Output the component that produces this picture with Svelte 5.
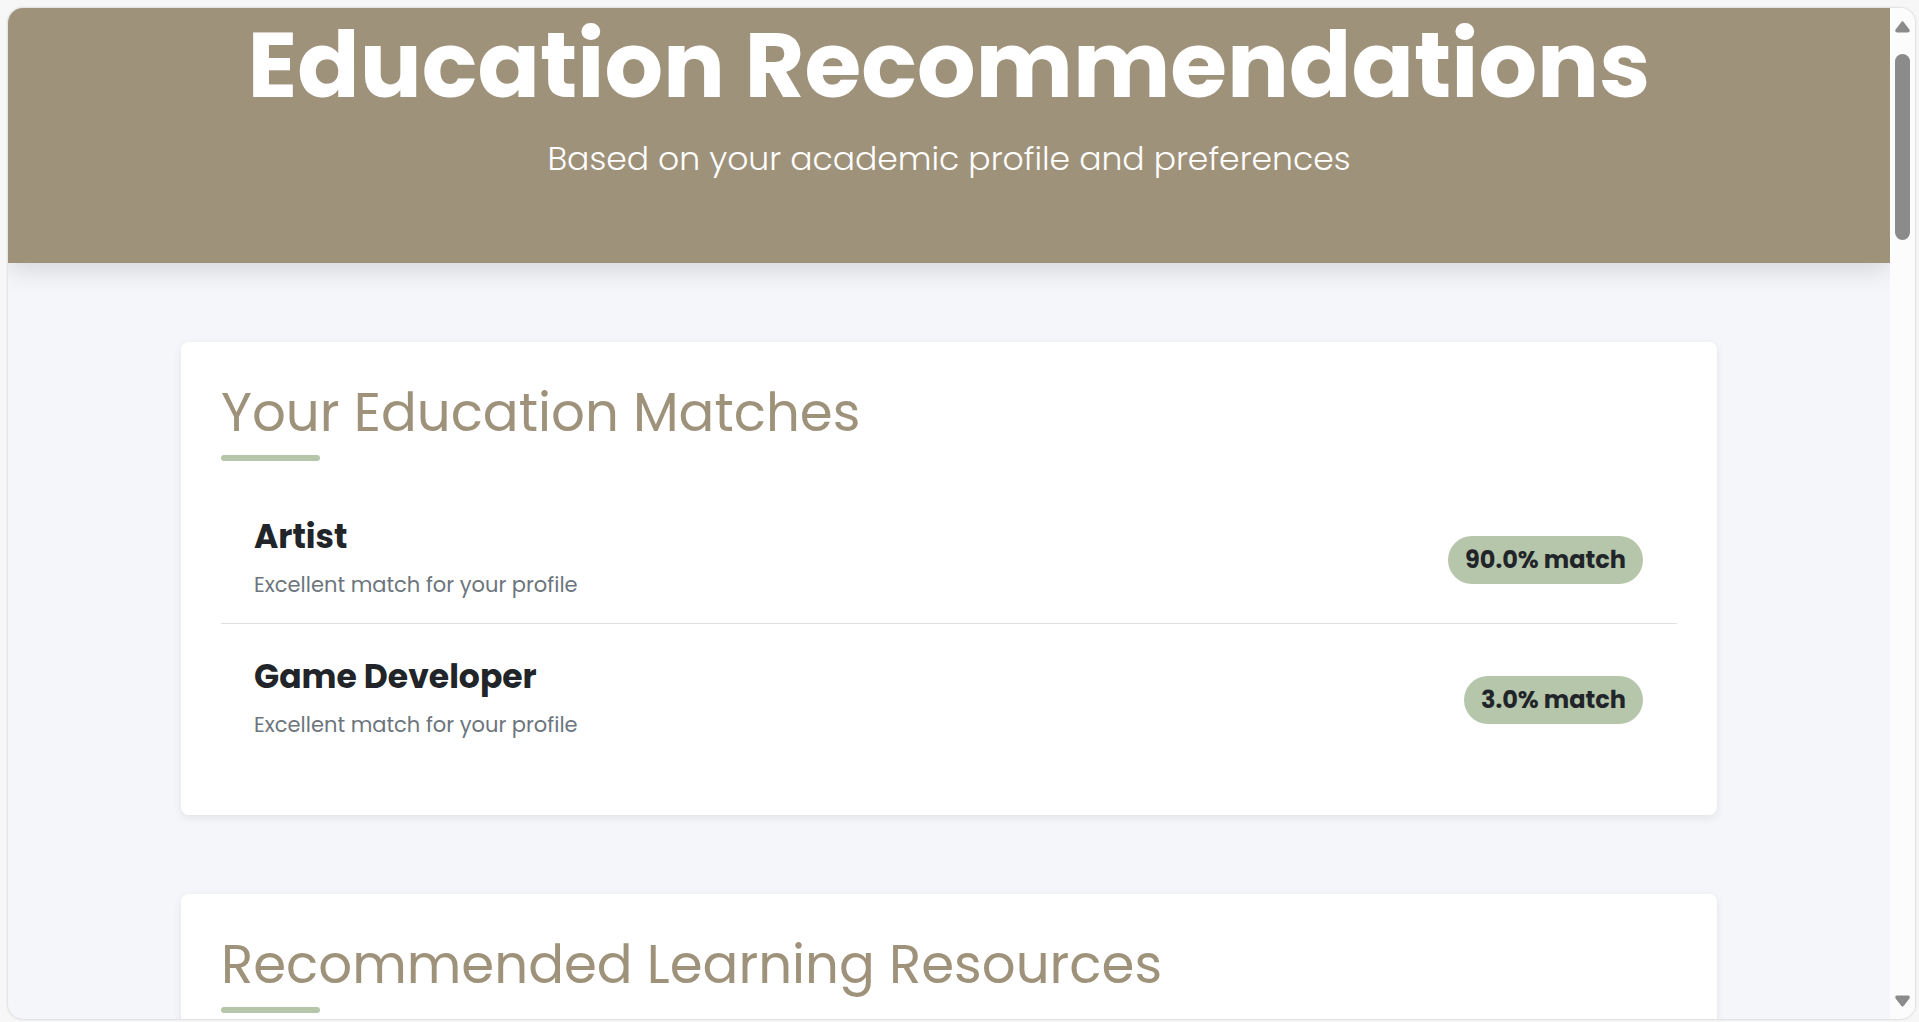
<script>
  const matches = [
    { title: 'Artist', note: 'Excellent match for your profile', score: 90 },
    { title: 'Game Developer', note: 'Excellent match for your profile', score: 3 }
  ];
</script>

<div class="window">
  <div class="page">
    <header>
      <h1>Education Recommendations</h1>
      <p>Based on your academic profile and preferences</p>
    </header>
    <main>
      <section class="card">
        <h2>Your Education Matches</h2>
        <ul>
          {#each matches as match}
            <li>
              <div class="text">
                <h3>{match.title}</h3>
                <p>{match.note}</p>
              </div>
              <span class="badge">{match.score.toFixed(1)}% match</span>
            </li>
          {/each}
        </ul>
      </section>
      <section class="card">
        <h2>Recommended Learning Resources</h2>
      </section>
    </main>
  </div>
  <div class="scrollbar" aria-hidden="true">
    <svg width="15" height="12" viewBox="0 0 15 12"><path d="M6 1.4Q7.5-.8 9 1.4L14.4 8.5Q15.6 11.5 12.8 11.5H2.2Q-.6 11.5.6 8.5Z" /></svg>
    <div class="track"><div class="thumb"></div></div>
    <svg width="15" height="12" viewBox="0 0 15 12"><path d="M6 10.6Q7.5 12.8 9 10.6L14.4 3.5Q15.6.5 12.8.5H2.2Q-.6.5.6 3.5Z" /></svg>
  </div>
</div>

<style>
  :global(body) {
    margin: 0;
    background: #f7f7f7;
  }
  .window {
    box-sizing: border-box;
    height: calc(100vh - 11px);
    margin: 8px 4px 3px 8px;
    display: flex;
    overflow: hidden;
    border-radius: 15px;
    background: #f5f6fa;
    box-shadow: 0 0 2px 1px #dcdedd;
    color: #212529;
    font-family: Poppins, Inter, sans-serif;
  }
  h1, h2, h3, p, ul {
    margin: 0;
    padding: 0;
  }
  .page {
    flex: 1;
    min-width: 0;
    overflow: hidden;
  }
  header {
    padding: 0 20px 79px;
    background: #9f927b;
    color: #fff;
    text-align: center;
    box-shadow: 0 8px 24px rgba(0, 0, 0, 0.12);
  }
  h1 {
    font-size: 92px;
    line-height: 114px;
    font-weight: 700;
    white-space: nowrap;
  }
  header p {
    padding-top: 11px;
    font-size: 33px;
    line-height: 51px;
    font-weight: 300;
  }
  main {
    max-width: 1536px;
    margin: 0 auto;
    padding-top: 79px;
  }
  .card {
    margin-bottom: 79px;
    padding: 40px 40px 39px;
    background: #fff;
    border-radius: 8px;
    box-shadow: 0 3px 8px rgba(0, 0, 0, 0.08);
  }
  h2 {
    color: #9f927b;
    font-size: 53px;
    line-height: 62px;
    font-weight: 400;
  }
  h2::after {
    content: '';
    display: block;
    width: 99px;
    height: 6px;
    margin-top: 11px;
    border-radius: 3px;
    background: #b5c6aa;
  }
  ul {
    padding-top: 36px;
    list-style: none;
  }
  li {
    display: flex;
    align-items: center;
    justify-content: space-between;
    height: 126px;
    margin-bottom: 13px;
    padding: 0 34px 0 33px;
  }
  li:not(:last-child) {
    border-bottom: 1px solid #dfe1e1;
  }
  .text {
    padding-bottom: 2px;
  }
  h3 {
    font-size: 33px;
    line-height: 40px;
    font-weight: 700;
  }
  li p {
    padding-top: 12px;
    color: #6c757d;
    font-size: 21px;
    line-height: 32px;
  }
  .badge {
    padding: 0 17px;
    border-radius: 24px;
    background: #b5c6aa;
    font-size: 24px;
    line-height: 48px;
    font-weight: 700;
  }
  .scrollbar {
    box-sizing: border-box;
    width: 25px;
    display: flex;
    flex-direction: column;
    align-items: center;
    gap: 21px;
    padding: 13px 0 12px;
    background: #fcfcfc;
  }
  .scrollbar svg {
    fill: #8b8b8b;
  }
  .track {
    flex: 1;
    width: 15px;
  }
  .thumb {
    height: 186px;
    border-radius: 8px;
    background: #8b8b8b;
  }
</style>
